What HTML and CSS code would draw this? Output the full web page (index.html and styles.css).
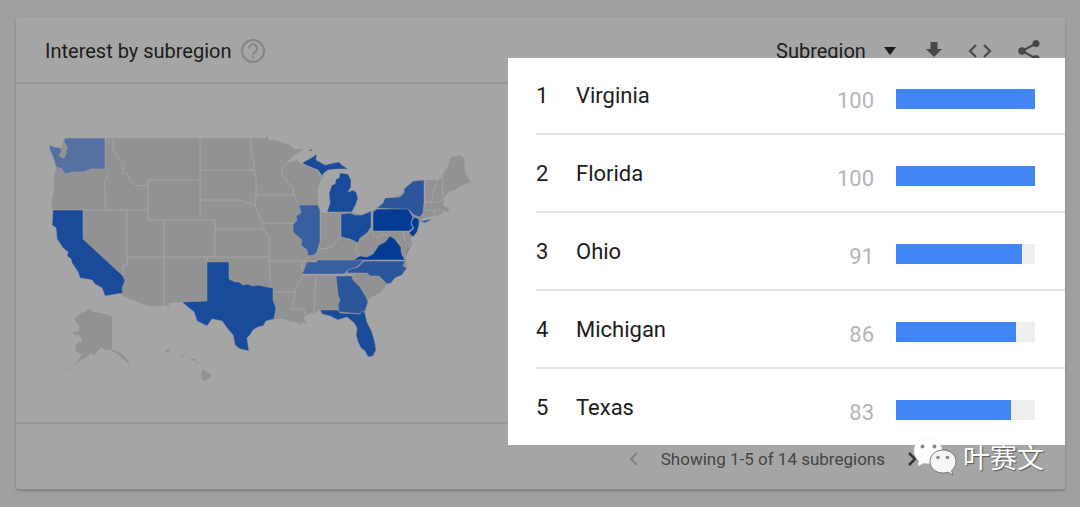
FILE: index.html
```html
<!DOCTYPE html>
<html lang="en">
<head>
    <meta charset="UTF-8">
    <meta name="viewport" content="width=device-width, initial-scale=1.0">
    <title>Interest by subregion</title>
    <link rel="stylesheet" href="styles.css">
</head>
<body>
    <main class="card">
        <header class="card-header">
            <h1>Interest by subregion</h1>
            <button class="icon-button help" aria-label="Help">
                <svg width="26" height="26" viewBox="0 0 26 26" fill="none" stroke="currentColor" stroke-width="2">
                    <circle cx="13" cy="13" r="11"/>
                    <path d="M9 10.500a4 4 0 1 1 6.500 3C14 14.500 13 15 13 17M13 18.300v2.200"/>
                </svg>
            </button>
            <div class="tools">
                <div class="resolution">
                    <select aria-label="Resolution">
                        <option>Subregion</option>
                    </select>
                    <svg width="12" height="8" viewBox="0 0 12 8"><path d="M0 0h12L6 8z" fill="currentColor"/></svg>
                </div>
                <button class="icon-button" aria-label="Download">
                    <svg width="16" height="18" viewBox="0 0 16 18"><path d="M4.500 0h7v7H16l-8 8-8-8h4.500z" fill="currentColor"/></svg>
                </button>
                <button class="icon-button" aria-label="Embed">
                    <svg width="24" height="14" viewBox="0 0 24 14" fill="none" stroke="currentColor" stroke-width="2.200"><path d="M8 1L2 7l6 6M16 1l6 6-6 6"/></svg>
                </button>
                <button class="icon-button" aria-label="Share">
                    <svg width="22" height="22" viewBox="0 0 22 22" fill="currentColor">
                        <path d="M18 3.500L4 11l14 7.500" fill="none" stroke="currentColor" stroke-width="2"/>
                        <circle cx="18" cy="3.500" r="3.500"/>
                        <circle cx="4" cy="11" r="3.800"/>
                        <circle cx="18" cy="18.500" r="3.500"/>
                    </svg>
                </button>
            </div>
        </header>

        <section class="card-body">
            <div class="map">
                <svg viewBox="40 125 440 265" role="img" aria-label="Map of the United States">
                    <!-- mainland, Alaska, Hawaii -->
                    <g class="land">
                        <path d="M64 138H266L267 134 269 140 276 140 283 143 290 145 294 149 304 149 296 154 289 160 287 163 297 160 302 164 309 167 318 171 320 177 324 175 320 182 318 190 318 205 320 211 323 213 352 212 362 215 371 211 377 208 424 180 438 180 442 177 444 172 447 168 450 159 453 156 456 157 459 155 464 158 465 173 471 182 460 186 455 190 450 191 444 197 443 204 445 207 449 208 448 212 443 211 440 215 423 218 419 225 417 232 411 237 412 244 409 250 406 257 407 268 402 275 395 278 387 284 380 293 369 298 365 313 340 316 321 310 314 313 305 315 304 319 308 324 302 322 300 325 296 322 291 322 284 319 275 319 250 325 207 301 182 302 169 303V306H148L123 296 62 240 51 205 54 190 54 178 56 168z"/>
                        <path d="M74 319L81 313 85 312 88 309 93 312 100 313 112 316V350L117 351 122 354 127 359 130 365 123 359 118 354 110 350 105 350 101 347 98 351 94 355 91 353 86 358 78 362 72 369 79 359 82 354 76 352 75 346 78 343 82 341 80 335 75 335 72 332 78 331 80 327z"/>
                        <path d="M165 350l4-1 0 3-3 0zM180 355l4 1-2 2zM190 359l5 0 1 2-5-1zM196 361l5 3-5-1zM202 369l4 2 6 5-7 5-3-1-1-6zM64 340l5 1-4 0zM71 369l-5 3 5-4z"/>
                    </g>
                    <!-- state lines -->
                    <g class="borders">
                        <path d="M113 138V150L118 157 124 163 123 174 127 173 131 182 136 186 148 185M105 138V169L109 173 104 184 105 187V210M51 210H148M148 180H200M148 180V220H215M200 138V220M127 210V265L123 265V276M164 220V306M127 257H269M207 257V262M215 220V257M215 229H264M200 200H240L248 203 255 205M200 170H254M251 138L251 148 254 165 254 172 256 177V197L255 205 259 215 262 226 267 235 269 239V261L271 288 273 292M256 195H294M262 223H293M269 261H302M273 292H294M287 163L282 168 282 174 286 180 293 187 294 195 299 205M308 256L302 265 303 275 296 287 294 300 291 309H304L305 315M316 275L314 313M303 275H355M302 261H405M320 210V242L318 252M341 214V237L334 244 330 248 320 249 308 256M341 237L350 239 358 243 355 250 360 256 353 260M358 243L367 235 372 229 373 236M372 231H410M372 236L377 237 383 234 390 236 397 241 402 247M373 211V231M403 231L405 241 410 245M438 180L434 190 431 203M442 177L443 198M424 202L438 202 444 199M423 210H442M435 210L434 216M424 180L425 202 422 216"/>
                    </g>
                    <g class="interest">
                        <path class="level-1" d="M49 145L55 147 61 148 62 151 59 155 61 157 64 158 66 153 67 147 64 142 65 138H105V169H91L83 172 73 172 65 174 62 169 56 167 55 163 53 157 50 150z"/>
                        <path class="level-4" d="M53 210H83V239L123 276 125 281 122 288 123 293 105 296 102 288 95 284 92 280 80 278 78 272 72 263 71 259 67 256 68 252 63 248 57 239 56 228 52 225z"/>
                        <path class="level-4" d="M182 302L207 301V262H229V279L235 282 239 282 243 285 248 284 252 286 258 285 267 287 273 288V300L276 308 274 319 266 321 263 326 258 327 253 330 250 335 247 338 249 351 240 349 235 345 233 335 227 328 222 321 212 319 207 326 197 321 194 312z"/>
                        <path class="level-2" d="M299 205H318L320 210V242L317 252 314 255 308 256 307 250 301 245 302 240 293 232 293 225 297 220 296 216 301 213z"/>
                        <path class="level-4" d="M302 163L311 158 317 154 316 160 320 162 325 165 333 163 339 162 342 165 348 169 337 169 328 170 324 173 322 176 318 170 308 166zM327 212L330 203 329 193 332 185 335 184 336 179 339 178 340 173 348 174 351 180 351 187 348 192 353 190 356 192 358 198 356 204 352 212zM308 151l5-3-2 3z"/>
                        <path class="level-4" d="M341 214L350 213 355 215 362 215 371 211V227L367 233 360 238 358 243 350 239 341 237z"/>
                        <path class="level-3" d="M377 208L383 203 385 198 400 197 404 193 404 189 413 181 424 180V202L423 213 420 217 414 215 409 210zM420 221L426 220 433 219 425 223z"/>
                        <path class="level-5" d="M373 212L377 209H408L413 217 411 223 413 228 409 231H373zM414 217L419 219 419 225 417 232 413 237 409 233 414 228 411 223z"/>
                        <path class="level-5" d="M353 260L360 256 367 257 373 254 379 245 385 242 390 236 395 239 397 242 401 247 401 251 402 255 405 260zM406 254l2-6 1 0-2 5z"/>
                        <path class="level-2" d="M307 262H317V260H364L357 267 347 271 344 274H302L305 267z"/>
                        <path class="level-3" d="M364 261H405L403 266 407 268 404 272 402 275 395 278 391 283 387 284 379 276 370 276 367 273H347L348 270 358 267z"/>
                        <path class="level-3" d="M336 276H352L353 280 360 287 366 297 368 302 365 311 361 314 339 312 338 305 340 300 338 295z"/>
                        <path class="level-4" d="M320 310H338L340 313 360 314 362 311 365 313 367 322 372 332 375 343 376 350 373 356 368 357 365 351 361 348 358 342 356 335 357 328 354 323 347 317 338 320 330 316 322 314z"/>
                    </g>
                </svg>
            </div>

            <div class="ranking">
                <table>
                    <tbody>
                        <tr>
                            <td class="rank">1</td>
                            <th scope="row">Virginia</th>
                            <td class="value">100</td>
                            <td class="meter"><div class="track"><div class="fill" style="width: 100%"></div></div></td>
                        </tr>
                        <tr>
                            <td class="rank">2</td>
                            <th scope="row">Florida</th>
                            <td class="value">100</td>
                            <td class="meter"><div class="track"><div class="fill" style="width: 100%"></div></div></td>
                        </tr>
                        <tr>
                            <td class="rank">3</td>
                            <th scope="row">Ohio</th>
                            <td class="value">91</td>
                            <td class="meter"><div class="track"><div class="fill" style="width: 91%"></div></div></td>
                        </tr>
                        <tr>
                            <td class="rank">4</td>
                            <th scope="row">Michigan</th>
                            <td class="value">86</td>
                            <td class="meter"><div class="track"><div class="fill" style="width: 86%"></div></div></td>
                        </tr>
                        <tr>
                            <td class="rank">5</td>
                            <th scope="row">Texas</th>
                            <td class="value">83</td>
                            <td class="meter"><div class="track"><div class="fill" style="width: 83%"></div></div></td>
                        </tr>
                    </tbody>
                </table>
            </div>
        </section>

        <footer class="card-footer">
            <button class="icon-button previous" aria-label="Previous" disabled>
                <svg width="10" height="14" viewBox="0 0 10 14" fill="none" stroke="currentColor" stroke-width="2"><path d="M8 1L2 7l6 6"/></svg>
            </button>
            <span>Showing 1-5 of 14 subregions</span>
            <button class="icon-button next" aria-label="Next">
                <svg width="10" height="14" viewBox="0 0 10 14" fill="none" stroke="currentColor" stroke-width="2.500"><path d="M2 1l6 6-6 6"/></svg>
            </button>
        </footer>
    </main>

    <div class="watermark">
        <svg width="44" height="40" viewBox="0 0 44 40">
            <path d="M15 1C7 1 1 6.500 1 14c0 4 2 7.500 5 10l-1 5 6-3c2 .5 5 .8 7 .5L29 13C28 6 22 1 15 1z" fill="#fff" stroke="#ddd" stroke-width="0.500"/>
            <path d="M30 13c-7.500 0-13 5-13 11.500S22.500 36 30 36c2 0 3.500-.3 5-.8l5 2.800-1.500-4.500c3-2 4.500-5.500 4.500-9C43 18 37.500 13 30 13z" fill="#f5f5f5" stroke="#777" stroke-width="1"/>
            <g fill="#888">
                <circle cx="9.500" cy="9.500" r="2"/>
                <circle cx="21.500" cy="9.500" r="2"/>
                <circle cx="25" cy="20.500" r="1.800"/>
                <circle cx="34.500" cy="20.500" r="1.800"/>
            </g>
        </svg>
        <span lang="zh">叶赛文</span>
    </div>
</body>
</html>
```
FILE: styles.css
```css
* {
    box-sizing: border-box;
}
body {
    margin: 0;
    padding: 17px 15px 17px 16px;
    background: #9f9f9f;
    color: #1c1c1c;
    font-family: Roboto, "Noto Sans", sans-serif;
}
h1 {
    margin: 0;
    font-size: 20px;
    font-weight: 400;
}
.card {
    background: #a5a5a5;
    border-radius: 3px;
    box-shadow: 0 2px 3px rgba(0, 0, 0, 0.2);
}
.card-header {
    display: flex;
    align-items: center;
    height: 67px;
    padding: 2px 25px 0 29px;
    border-bottom: 2px solid #979797;
}
.icon-button {
    display: flex;
    padding: 0;
    border: none;
    background: none;
    color: #484848;
    cursor: pointer;
}
.help {
    margin-left: 8px;
    color: #858585;
}
.tools {
    display: flex;
    align-items: center;
    gap: 26px;
    margin-left: auto;
}
.resolution {
    display: flex;
    align-items: center;
    gap: 18px;
    margin-right: 4px;
}
.resolution select {
    appearance: none;
    padding: 0;
    border: none;
    background: none;
    color: inherit;
    font: inherit;
    font-size: 20px;
}
.card-body {
    display: grid;
    grid-template-columns: 492fr 557fr;
}
.map {
    padding: 41px 28px 0 24px;
}
.map svg {
    display: block;
    width: 100%;
}
.land {
    fill: #929292;
}
.borders {
    fill: none;
    stroke: #a3a3a3;
    stroke-width: 1;
}
.interest {
    stroke: #a3a3a3;
    stroke-width: 0.5;
}
.level-1 {
    fill: #5571a2;
}
.level-2 {
    fill: #385f9f;
}
.level-3 {
    fill: #2b569c;
}
.level-4 {
    fill: #1a4a9a;
}
.level-5 {
    fill: #053a95;
}
/* the list stands out over the header and the footer */
.ranking {
    position: relative;
    margin: -26px 0 -23px;
    padding-left: 28px;
    background: #fff;
}
table {
    width: 100%;
    border-collapse: collapse;
    font-size: 22px;
}
td, th {
    height: 78px;
    padding: 0;
    border-bottom: 2px solid #e4e4e6;
    font-weight: 400;
    text-align: left;
}
tr:first-child > * {
    height: 76px;
}
tr:last-child > * {
    height: 77px;
    border-bottom: none;
}
.rank {
    width: 40px;
}
td.value {
    width: 80px;
    padding: 10px 22px 0 0;
    color: #b5b5b8;
    text-align: right;
}
.meter {
    width: 169px;
    padding: 6px 30px 0 0;
}
.track {
    height: 20px;
    background: #eee;
}
.fill {
    height: 100%;
    background: #4285f4;
}
.card-footer {
    display: flex;
    align-items: center;
    justify-content: flex-end;
    gap: 22px;
    height: 67px;
    padding: 4px 148px 0 0;
    border-top: 2px solid #979797;
    color: #444;
    font-size: 17px;
}
.previous {
    color: #808080;
}
.next {
    color: #333;
}
.watermark {
    position: absolute;
    right: 36px;
    bottom: 30px;
    display: flex;
    align-items: center;
    gap: 6px;
    color: #fff;
    font-family: "Noto Sans CJK SC", sans-serif;
    font-size: 27px;
    line-height: 40px;
    text-shadow: 1px 1px 1px #555;
}
```
